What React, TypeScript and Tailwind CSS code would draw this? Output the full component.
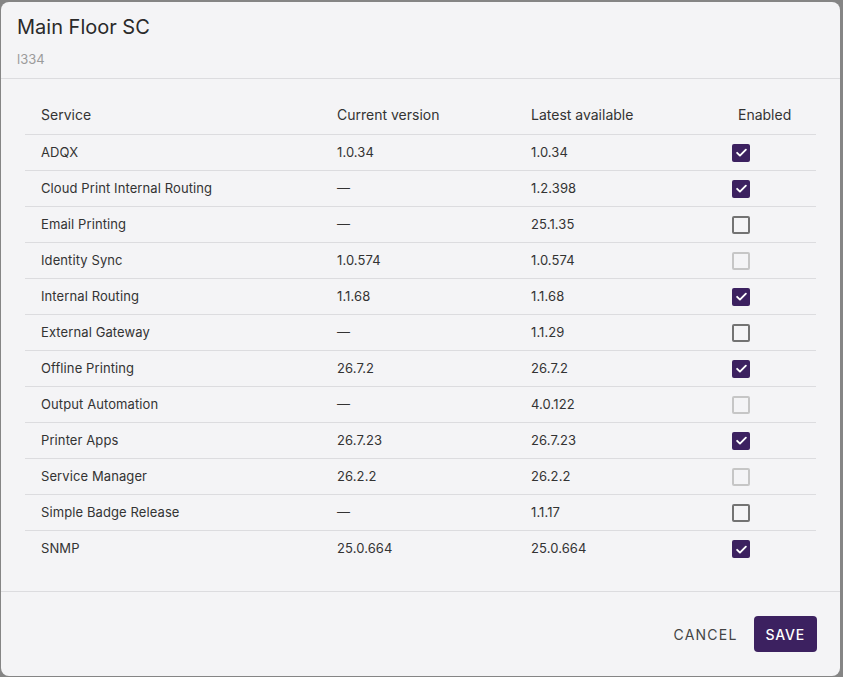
const ROWS = [
  { name: "ADQX", current: "1.0.34", latest: "1.0.34", state: "on" },
  { name: "Cloud Print Internal Routing", current: "—", latest: "1.2.398", state: "on" },
  { name: "Email Printing", current: "—", latest: "25.1.35", state: "off" },
  { name: "Identity Sync", current: "1.0.574", latest: "1.0.574", state: "disabled" },
  { name: "Internal Routing", current: "1.1.68", latest: "1.1.68", state: "on" },
  { name: "External Gateway", current: "—", latest: "1.1.29", state: "off" },
  { name: "Offline Printing", current: "26.7.2", latest: "26.7.2", state: "on" },
  { name: "Output Automation", current: "—", latest: "4.0.122", state: "disabled" },
  { name: "Printer Apps", current: "26.7.23", latest: "26.7.23", state: "on" },
  { name: "Service Manager", current: "26.2.2", latest: "26.2.2", state: "disabled" },
  { name: "Simple Badge Release", current: "—", latest: "1.1.17", state: "off" },
  { name: "SNMP", current: "25.0.664", latest: "25.0.664", state: "on" },
];

function Check({ state }: { state: string }) {
  if (state === "on") {
    return (
      <span className="flex h-[18px] w-[18px] items-center justify-center rounded-[2px] bg-[#3c2160]">
        <svg viewBox="0 0 24 24" className="h-[15px] w-[15px]" fill="none" stroke="#fff" strokeWidth="3" strokeLinecap="round" strokeLinejoin="round">
          <path d="M5 12.5l4.5 4.5L19 7.5" />
        </svg>
      </span>
    );
  }
  return (
    <span
      className={`block h-[18px] w-[18px] rounded-[2px] border-2 ${
        state === "off" ? "border-[#737373]" : "border-[#c6c6c6]"
      }`}
    />
  );
}

export default function App() {
  return (
    <div
      className="h-[677px] w-[843px] bg-[#858585] pl-[1px] pt-[2px]"
      style={{ fontFamily: "Inter, 'Noto Sans', sans-serif" }}
    >
      <div className="flex h-[674px] w-[839px] flex-col rounded-lg bg-[#f4f4f6] text-[#333]">
        {/* Header */}
        <div className="border-b border-[#dcdcdf] px-4 pb-[9px] pt-[11px]">
          <h2 className="text-[20px] leading-7 text-[#2a2a2a]">Main Floor SC</h2>
          <p className="mt-[8px] text-[13px] leading-5 text-[#9b9b9b]">l334</p>
        </div>

        {/* Table */}
        <div className="flex-1 px-6 pt-4">
          <div className="grid h-10 grid-cols-[296px_194px_196px_1fr] items-center border-b border-[#dcdcdf] text-[14px]">
            <div className="pl-4">Service</div>
            <div className="pl-4">Current version</div>
            <div className="pl-4">Latest available</div>
            <div className="pl-[27px]">Enabled</div>
          </div>
          {ROWS.map((r, i) => (
            <div
              key={r.name}
              className={`grid h-9 grid-cols-[296px_194px_196px_1fr] items-center text-[13px] tracking-[0.1px] ${
                i < ROWS.length - 1 ? "border-b border-[#dcdcdf]" : ""
              }`}
            >
              <div className="pl-4">{r.name}</div>
              <div className="pl-4">{r.current}</div>
              <div className="pl-4">{r.latest}</div>
              <div className="pl-[21px]">
                <Check state={r.state} />
              </div>
            </div>
          ))}
        </div>

        {/* Footer */}
        <div className="flex h-[85px] items-center justify-end gap-2 border-t border-[#dcdcdf] pr-[23px]">
          <button className="px-2 text-[14px] tracking-[1.2px] text-[#444]">CANCEL</button>
          <button className="h-9 rounded bg-[#3c2160] px-3 text-[14px] font-medium tracking-[0.8px] text-white">
            SAVE
          </button>
        </div>
      </div>
    </div>
  );
}
